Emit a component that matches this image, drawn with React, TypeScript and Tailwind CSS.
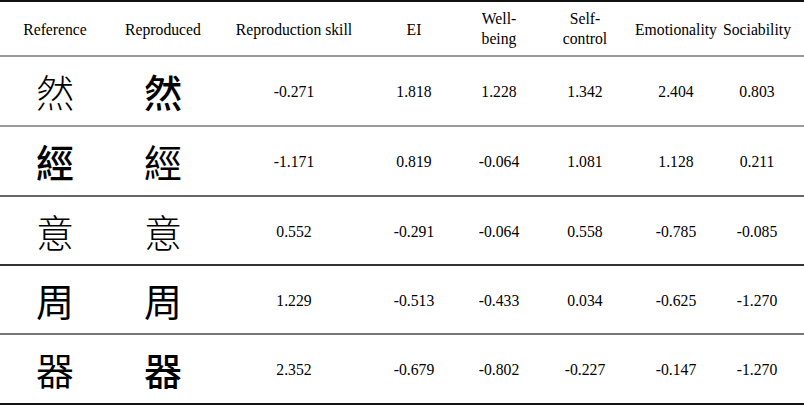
import React from "react";

type Row = {
  glyph: string;
  refWeight: string;
  repWeight: string;
  values: string[];
  rowClass: string;
  lineClass: string;
};

const cols = "grid grid-cols-[110px_106px_156px_84px_86px_86px_96px_66px_1fr]";

const cjk = { fontFamily: '"Noto Sans CJK TC", "Noto Sans CJK SC", sans-serif' };

const rows: Row[] = [
  { glyph: "然", refWeight: "font-light", repWeight: "font-medium", values: ["-0.271", "1.818", "1.228", "1.342", "2.404", "0.803"], rowClass: "h-[70px]", lineClass: "border-[#9b9b9b]" },
  { glyph: "經", refWeight: "font-medium", repWeight: "font-normal", values: ["-1.171", "0.819", "-0.064", "1.081", "1.128", "0.211"], rowClass: "h-[70px]", lineClass: "border-[#666]" },
  { glyph: "意", refWeight: "font-light", repWeight: "font-light", values: ["0.552", "-0.291", "-0.064", "0.558", "-0.785", "-0.085"], rowClass: "h-[69px]", lineClass: "border-[#333]" },
  { glyph: "周", refWeight: "font-normal", repWeight: "font-normal", values: ["1.229", "-0.513", "-0.433", "0.034", "-0.625", "-1.270"], rowClass: "h-[69px]", lineClass: "border-[#777]" },
  { glyph: "器", refWeight: "font-normal", repWeight: "font-medium", values: ["2.352", "-0.679", "-0.802", "-0.227", "-0.147", "-1.270"], rowClass: "h-[70px]", lineClass: "border-[#111]" },
];

function Cell({ children, className = "" }: { children: React.ReactNode; className?: string }) {
  return <div className={`flex items-center justify-center text-center whitespace-nowrap ${className}`}>{children}</div>;
}

export default function App() {
  return (
    <div
      className="w-[804px] h-[406px] bg-white text-black text-[15.7px] leading-[18px]"
      style={{ fontFamily: '"Liberation Serif", "Times New Roman", serif' }}
    >
      <div className="border-t-2 border-[#111]" />
      {/* header */}
      <div className={`${cols} h-[55px] border-b-2 border-[#9b9b9b]`}>
        <Cell className="pt-[2px]">Reference</Cell>
        <Cell className="pt-[2px]">Reproduced</Cell>
        <Cell className="pt-[2px]">Reproduction skill</Cell>
        <Cell className="pt-[2px]">EI</Cell>
        <Cell className="flex-col">
          <span>Well-</span>
          <span className="mt-[2px]">being</span>
        </Cell>
        <Cell className="flex-col">
          <span>Self-</span>
          <span className="mt-[2px]">control</span>
        </Cell>
        <Cell className="pt-[2px]">Emotionality</Cell>
        <Cell className="pt-[2px]">Sociability</Cell>
        <div />
      </div>

      {rows.map((r) => (
        <div key={r.glyph} className={`${cols} ${r.rowClass} border-b-2 ${r.lineClass}`}>
          <Cell className={`text-[38px] leading-none ${r.refWeight}`}>
            <span style={cjk}>{r.glyph}</span>
          </Cell>
          <Cell className={`text-[38px] leading-none ${r.repWeight}`}>
            <span style={cjk}>{r.glyph}</span>
          </Cell>
          {r.values.map((v, i) => (
            <Cell key={i} className="pt-[2px]">{v}</Cell>
          ))}
          <div />
        </div>
      ))}
    </div>
  );
}
